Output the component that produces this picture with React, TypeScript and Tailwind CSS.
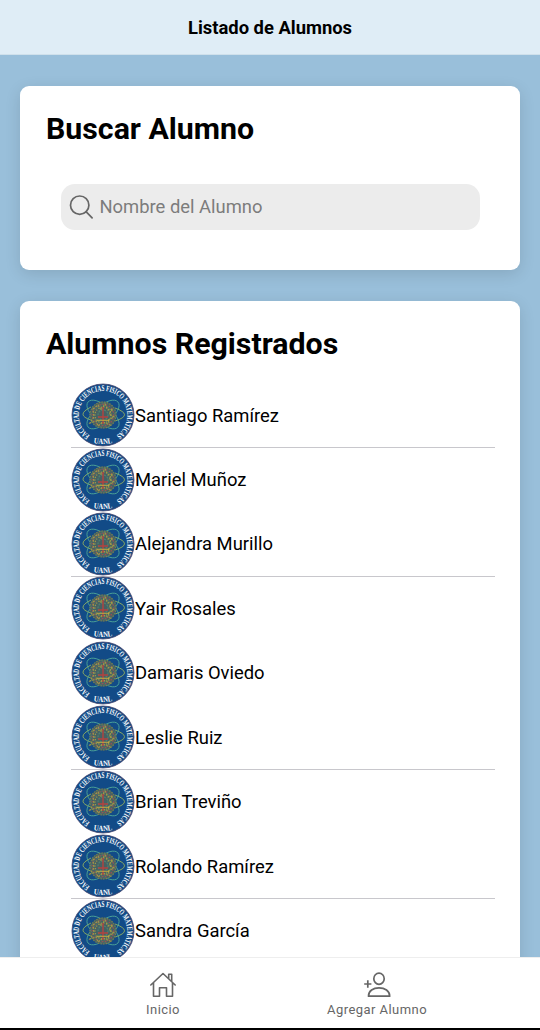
type Student = { name: string; divider: boolean };

const students: Student[] = [
  { name: "Santiago Ramírez", divider: true },
  { name: "Mariel Muñoz", divider: false },
  { name: "Alejandra Murillo", divider: true },
  { name: "Yair Rosales", divider: false },
  { name: "Damaris Oviedo", divider: false },
  { name: "Leslie Ruiz", divider: true },
  { name: "Brian Treviño", divider: false },
  { name: "Rolando Ramírez", divider: true },
  { name: "Sandra García", divider: false },
];

function Emblem({ id }: { id: string }) {
  return (
    <svg viewBox="0 0 64 64" className="h-16 w-16 shrink-0" role="img">
      <defs>
        <path id={`${id}-ring`} d="M18.6 52.3 A24.2 24.2 0 1 1 45.4 52.3" />
        <path id={`${id}-base`} d="M20 59.2 Q32 62.6 44 59.2" />
      </defs>
      <circle cx="32" cy="32" r="31" fill="#124b87" stroke="#48466f" strokeWidth="0.8" />
      <g fill="#fff" className="font-['Liberation_Serif',serif] font-bold">
        <text fontSize="8.2">
          <textPath href={`#${id}-ring`} textLength="123" lengthAdjust="spacingAndGlyphs">
            FACULTAD DE CIENCIAS FISICO MATEMATICAS
          </textPath>
        </text>
        <text fontSize="7.8" textAnchor="middle">
          <textPath href={`#${id}-base`} startOffset="50%" textLength="19" lengthAdjust="spacingAndGlyphs">
            UANL
          </textPath>
        </text>
      </g>
      <g fill="none" stroke="#52ab98" strokeWidth="0.8">
        <path d="M20 24Q4 32 20 37M44 25Q63 32 44 38" stroke="#a2bd58" />
        <ellipse cx="32" cy="31.5" rx="19.5" ry="9" transform="rotate(40 32 31.5)" />
        <ellipse cx="32" cy="31.5" rx="19.5" ry="9" transform="rotate(-40 32 31.5)" />
      </g>
      <circle cx="32" cy="32" r="13.5" fill="#52665c" fillOpacity="0.82" />
      <g fill="none" strokeWidth="1.2">
        <circle cx="32" cy="32" r="13" stroke="#7c8350" strokeDasharray="1.2 1.5" />
        <circle cx="32" cy="32" r="10.7" stroke="#985056" strokeDasharray="1.6 1.7" />
        <circle cx="32" cy="32" r="8" stroke="#a29a48" strokeDasharray="1.2 1.5" />
        <circle cx="32" cy="32" r="5" stroke="#4d8373" strokeDasharray="2 1" />
        <path
          d="M22 26l5-4 3 5 4-6 3 6 5-1-4 5 5 3-6 3 2 5-7-3-5 4-2-5-6 2 4-6z"
          stroke="#a09a48"
          strokeDasharray="2 1.2"
        />
        <path d="M32 24v17M27 34h10" stroke="#b34340" strokeWidth="1.4" />
        <path d="M26 37.3h12" stroke="#cfb23e" strokeWidth="0.9" />
      </g>
    </svg>
  );
}

function SearchIcon() {
  return (
    <svg viewBox="0 0 24 24" className="h-6 w-6 shrink-0" fill="none" stroke="#666" strokeWidth="1.7">
      <circle cx="10.7" cy="10.2" r="9.2" />
      <path d="M17 16.6l6.1 6.2" strokeLinecap="round" />
    </svg>
  );
}

function HomeIcon() {
  return (
    <svg viewBox="0 0 28 28" className="h-7 w-7" fill="none" stroke="#666" strokeWidth="1.6" strokeLinejoin="round" strokeLinecap="round">
      <path d="M1.8 14L14 2.5 26.2 14M4.5 11.5V25.2H10.5v-8.5h7v8.5h6V11.5M19.7 7.8V3.2h3v7.3" />
    </svg>
  );
}

function AddPersonIcon() {
  return (
    <svg viewBox="0 0 28 28" className="h-7 w-7" fill="none" stroke="#666" strokeWidth="1.7" strokeLinejoin="round">
      <ellipse cx="16" cy="7.7" rx="5.2" ry="5.6" />
      <path d="M5.5 25.2c0-5.4 4.7-8.3 10.5-8.3s10.7 2.9 10.7 8.3zM4.8 9.3v7.4M1.2 13h7.2" />
    </svg>
  );
}

export default function App() {
  return (
    <div className="flex h-[1030px] w-[540px] flex-col overflow-hidden bg-[#99bfda] font-[Roboto,sans-serif] text-black">
      <header className="flex h-[55px] shrink-0 items-center justify-center border-b border-[#cfe0eb] bg-[#dfedf6]">
        <h1 className="pt-[2px] text-[18.4px] font-bold">Listado de Alumnos</h1>
      </header>

      <main className="flex min-h-0 flex-1 flex-col gap-[31px] overflow-hidden px-5 pt-[31px]">
        <section className="h-[184px] shrink-0 rounded-[9px] bg-white px-[26px] pt-6 shadow-[0_4px_16px_rgba(0,0,0,0.12)]">
          <h2 className="text-[30.3px] leading-[38px] font-bold">Buscar Alumno</h2>
          <div className="mx-[15px] mt-9 flex h-[46px] w-[419px] items-center gap-[6.5px] rounded-[14px] bg-[#ececec] pl-2">
            <SearchIcon />
            <input
              placeholder="Nombre del Alumno"
              className="min-w-0 flex-1 bg-transparent text-[18.4px] outline-none placeholder:text-[#7c7c7c]"
            />
          </div>
        </section>

        <section className="h-[760px] shrink-0 rounded-[9px] bg-white pl-[26px] shadow-[0_4px_16px_rgba(0,0,0,0.12)]">
          <h2 className="pt-6 text-[30.3px] leading-[38px] font-bold">Alumnos Registrados</h2>
          <ul className="mt-[20.4px] ml-[25px] w-[424px]">
            {students.map(({ name, divider }, i) => (
              <li
                key={name}
                className={`flex h-[64.45px] items-center border-b ${divider ? "border-[#c8c7cc]" : "border-transparent"}`}
              >
                <Emblem id={`emblem-${i}`} />
                <span className="pt-[0.4px] text-[18.4px]">{name}</span>
              </li>
            ))}
          </ul>
        </section>
      </main>

      <nav className="flex h-[73px] shrink-0 border-t border-b-2 border-t-[#eeeeee] border-b-black bg-white pr-[1px] text-[13px] tracking-[0.45px] text-[#666]">
        <div className="flex w-[326px] justify-center pt-[13px]">
          <div className="flex flex-col items-center gap-[1px]">
            <HomeIcon />
            <span>Inicio</span>
          </div>
        </div>
        <div className="-ml-[56px] flex w-[214px] justify-center pt-[13px]">
          <div className="flex flex-col items-center gap-[1px]">
            <AddPersonIcon />
            <span>Agregar Alumno</span>
          </div>
        </div>
      </nav>
    </div>
  );
}
